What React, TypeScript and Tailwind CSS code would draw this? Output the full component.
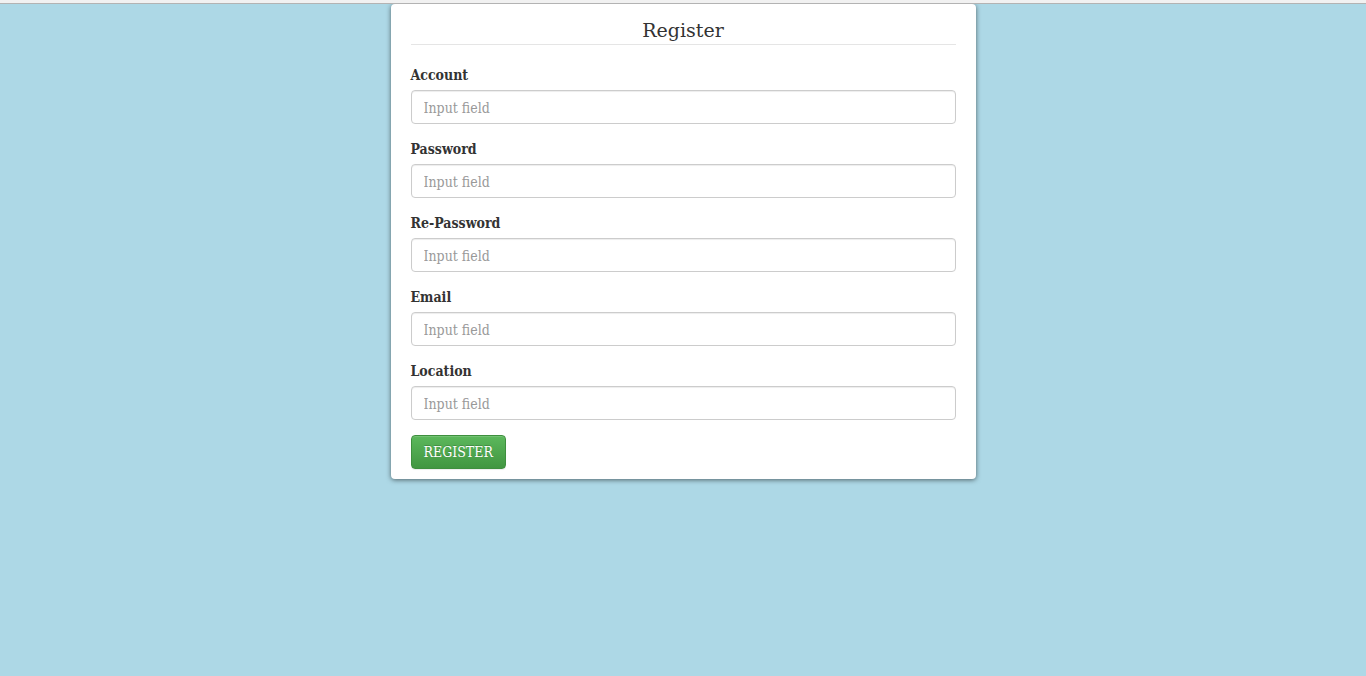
import React from "react";

const fields: { id: string; label: string; type: string }[] = [
  { id: "account", label: "Account", type: "text" },
  { id: "password", label: "Password", type: "password" },
  { id: "re-password", label: "Re-Password", type: "password" },
  { id: "email", label: "Email", type: "email" },
  { id: "location", label: "Location", type: "text" },
];

export default function App() {
  return (
    <div className="flex min-h-screen flex-col bg-[#add8e6] font-['Roboto_Slab','DejaVu_Serif_Condensed','DejaVu_Serif',serif] text-sm text-[#333333]">
      <header className="relative h-1 border-b border-[#b3b3b3] bg-[#f1f1f1]" />
      <main className="mx-auto w-full max-w-[585px]">
        <form
          className="rounded bg-white px-5 pt-[14px] pb-[10px] shadow-[0_1px_5px_rgba(0,0,0,0.55)]"
          onSubmit={(event) => event.preventDefault()}
        >
          <h1 className="mb-5 border-b border-[#e5e5e5] pb-0.5 text-center font-['Roboto_Slab','DejaVu_Serif',serif] text-[19px] leading-6 font-normal">
            Register
          </h1>
          {fields.map((field) => (
            <div key={field.id} className="mb-[15px]">
              <label htmlFor={field.id} className="mb-[5px] block text-sm leading-5 font-bold">
                {field.label}
              </label>
              <input
                id={field.id}
                type={field.type}
                placeholder="Input field"
                className="block h-[34px] w-full rounded border border-[#cccccc] bg-white px-3 pt-0.5 text-sm text-[#555555] shadow-[inset_0_1px_1px_rgba(0,0,0,0.075)] outline-none placeholder:text-[#999999] focus:border-[#66afe9]"
              />
            </div>
          ))}
          <button
            type="submit"
            className="block h-[34px] cursor-pointer rounded border border-[#3e8f3e] bg-linear-to-b from-[#5cb85c] to-[#419641] px-3 text-sm leading-5 text-white shadow-[inset_0_1px_0_rgba(255,255,255,0.15),0_1px_1px_rgba(0,0,0,0.075)] text-shadow-[0_-1px_0_rgba(0,0,0,0.2)]"
          >
            REGISTER
          </button>
        </form>
      </main>
    </div>
  );
}
